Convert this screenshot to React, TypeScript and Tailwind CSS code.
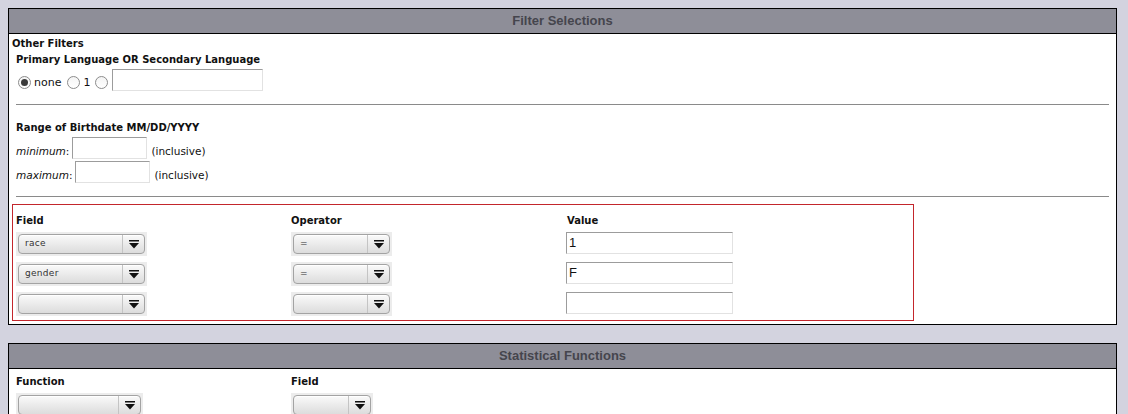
import React from 'react';

const body = "font-['DejaVu_Sans',sans-serif]";

function Arrow() {
  return (
    <svg width="10" height="9" viewBox="0 0 10 9" className="block">
      <rect x="0" y="0" width="10" height="1.5" fill="#111" />
      <path d="M0 3 L10 3 L5 8.5 Z" fill="#111" />
    </svg>
  );
}

function Select({ width, value }: { width: number; value?: string }) {
  return (
    <div className="h-[24px] bg-[#ececec] p-[2px]" style={{ width }}>
      <div className="flex h-full rounded-[4px] border border-[#a3a3a3] bg-gradient-to-b from-[#fafafa] to-[#dcdcdc] shadow-[inset_0_1px_0_#fff]">
        <span className="flex flex-1 items-center pl-[6px] text-[9px] tracking-[0.3px] text-[#333]">{value}</span>
        <span className="flex w-[22px] items-center justify-center border-l border-[#c4c4c4]">
          <Arrow />
        </span>
      </div>
    </div>
  );
}

function TextBox({ width, value, className = '' }: { width: number; value?: string; className?: string }) {
  return (
    <div
      className={`flex h-[22px] items-center border border-t-[#9c9c9c] border-l-[#9c9c9c] border-r-[#e2e2e2] border-b-[#e2e2e2] bg-white pl-[2px] font-['Liberation_Sans',sans-serif] text-[13px] text-[#111] ${className}`}
      style={{ width }}
    >
      {value}
    </div>
  );
}

function Radio({ checked }: { checked?: boolean }) {
  return (
    <span className="flex h-[13px] w-[13px] items-center justify-center rounded-full border border-[#8c8c8c] bg-gradient-to-b from-[#f4f4f4] to-white">
      {checked ? <span className="h-[7px] w-[7px] rounded-full bg-[#3a3a3a]" /> : null}
    </span>
  );
}

function Panel({ title, children, className = '' }: { title: string; children: React.ReactNode; className?: string }) {
  return (
    <section className={`ml-[8px] mr-[11px] border border-black bg-white ${className}`}>
      <div className="flex h-[25px] items-center justify-center border-b border-black bg-[#8e8e98] font-['Liberation_Sans',sans-serif] text-[13px] font-bold text-[#45454d]">
        {title}
      </div>
      {children}
    </section>
  );
}

export default function App() {
  const rows = [
    { field: 'race', op: '=', value: '1' },
    { field: 'gender', op: '=', value: 'F' },
    { field: '', op: '', value: '' },
  ];

  return (
    <div className={`h-[414px] overflow-hidden bg-[#d3d3df] pt-[8px] text-[#111] ${body}`}>
      <Panel title="Filter Selections">
        <div className="px-[3px] pb-[3px]">
          <div className="mt-[3px] h-[14px] text-[10px] font-bold leading-[14px]">Other Filters</div>
          <div className="px-[4px]">
            <div className="mt-[2px] h-[14px] text-[10px] font-bold leading-[14px]">Primary Language OR Secondary Language</div>
            <div className="mt-[2px] flex h-[22px] items-end text-[11px] leading-[14px]">
              <span className="mb-[2px] ml-[2px]"><Radio checked /></span>
              <span className="mb-[1px] ml-[3px]">none</span>
              <span className="mb-[2px] ml-[6px]"><Radio /></span>
              <span className="mb-[1px] ml-[3px]">1</span>
              <span className="mb-[2px] ml-[5px]"><Radio /></span>
              <TextBox width={151} className="ml-[4px]" />
            </div>
            <div className="mt-[13px] h-px bg-[#8a8a8a]" />
            <div className="mt-[16px] h-[14px] text-[10px] font-bold leading-[14px]">Range of Birthdate MM/DD/YYYY</div>
            <div className="mt-[2px] flex h-[22px] items-end text-[10.5px] leading-[16px]">
              <span className="italic">minimum</span>
              <span>:</span>
              <TextBox width={75} className="ml-[3px]" />
              <span className="ml-[4px]">(inclusive)</span>
            </div>
            <div className="mt-[2px] flex h-[22px] items-end text-[10.5px] leading-[16px]">
              <span className="italic">maximum</span>
              <span>:</span>
              <TextBox width={75} className="ml-[3px]" />
              <span className="ml-[4px]">(inclusive)</span>
            </div>
            <div className="mt-[13px] h-px bg-[#8a8a8a]" />
          </div>
          <div className="mt-[7px] w-[902px] border border-[#c3262c] px-[3px] pb-[4px]">
            <div className="grid grid-cols-[275px_276px_1fr]">
              <div className="mt-[9px] h-[14px] text-[10px] font-bold leading-[14px]">Field</div>
              <div className="mt-[9px] h-[14px] text-[10px] font-bold leading-[14px]">Operator</div>
              <div className="mt-[9px] h-[14px] text-[10px] font-bold leading-[14px]">Value</div>
            </div>
            <div className="mt-[4px] flex flex-col gap-[6px]">
              {rows.map((r, i) => (
                <div key={i} className="grid grid-cols-[275px_276px_1fr] items-start">
                  <Select width={131} value={r.field} />
                  <Select width={101} value={r.op} />
                  <TextBox width={167} value={r.value} className="-ml-[1px]" />
                </div>
              ))}
            </div>
          </div>
        </div>
      </Panel>

      <Panel title="Statistical Functions" className="mt-[18px]">
        <div className="px-[7px]">
          <div className="grid grid-cols-[275px_1fr]">
            <div className="mt-[6px] h-[14px] text-[10px] font-bold leading-[14px]">Function</div>
            <div className="mt-[6px] h-[14px] text-[10px] font-bold leading-[14px]">Field</div>
          </div>
          <div className="mt-[4px] grid grid-cols-[275px_1fr]">
            <Select width={127} />
            <Select width={82} />
          </div>
        </div>
      </Panel>
    </div>
  );
}
